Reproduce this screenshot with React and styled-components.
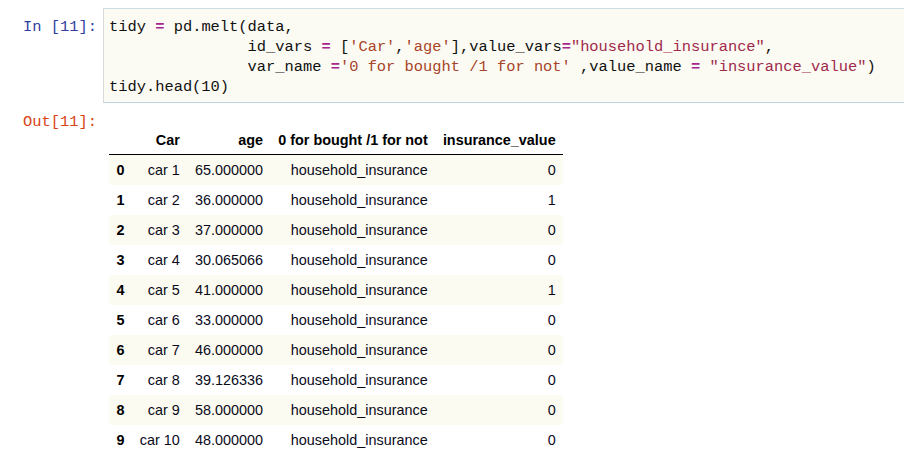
import React from "react";
import styled, { createGlobalStyle } from "styled-components";

const Global = createGlobalStyle`
  html, body { margin: 0; padding: 0; background: #ffffff; overflow: hidden; }
  #root { width: 904px; height: 461px; }
`;

const Page = styled.div`
  display: flex;
  flex-direction: column;
  padding-top: 8px;
`;

const CellRow = styled.div`
  display: flex;
  align-items: flex-start;
`;

const Prompt = styled.div`
  width: 103px;
  flex: none;
  box-sizing: border-box;
  padding: ${(p) => p.$pt || 0}px 6px 0 0;
  text-align: right;
  font-family: "Liberation Mono", "DejaVu Sans Mono", monospace;
  font-size: 15.4px;
  line-height: 20px;
  color: ${(p) => p.$color};
  white-space: pre;
`;

const CodeBox = styled.div`
  flex: 1;
  box-sizing: border-box;
  height: 95px;
  background: #fcfbf3;
  border: 1px solid #d6dbd6;
  border-right: none;
  border-top-color: #cadde6;
  border-bottom-color: #bad4e6;
  padding: 8px 0 4px 5px;
`;

const Code = styled.pre`
  margin: 0;
  font-family: "Liberation Mono", "DejaVu Sans Mono", monospace;
  font-size: 15.4px;
  line-height: 20px;
  color: #111111;
`;

const Op = styled.span`
  color: #a6258f;
  font-weight: bold;
`;

const Str = styled.span`
  color: ${(p) => (p.$dq ? "#9f2a4c" : "#a8442a")};
`;

const OutBody = styled.div`
  display: flex;
  flex-direction: column;
  padding-left: 6px;
  padding-top: 22px;
`;

const Table = styled.table`
  border-collapse: collapse;
  border-spacing: 0;
  font-family: "Liberation Sans", Arial, sans-serif;
  font-size: 14.4px;
  color: #000000;
`;

const Head = styled.thead`
  border-bottom: 1px solid #000000;
`;

const Th = styled.th`
  text-align: right;
  font-weight: bold;
  padding: 0 7.6px;
  height: 29px;
  line-height: 16px;
  vertical-align: middle;
  white-space: nowrap;
`;

const Tr = styled.tr`
  background: ${(p) => (p.$striped ? "#fcfbf1" : "transparent")};
`;

const IndexCell = styled.th`
  text-align: right;
  font-weight: bold;
  padding: 0 7.6px;
  height: 30px;
  line-height: 16px;
  vertical-align: middle;
`;

const Td = styled.td`
  text-align: right;
  padding: 0 7.6px;
  height: 30px;
  line-height: 16px;
  vertical-align: middle;
  white-space: nowrap;
  color: #0a0a1a;
`;

const rows = [
  ["car 1", "65.000000", 0],
  ["car 2", "36.000000", 1],
  ["car 3", "37.000000", 0],
  ["car 4", "30.065066", 0],
  ["car 5", "41.000000", 1],
  ["car 6", "33.000000", 0],
  ["car 7", "46.000000", 0],
  ["car 8", "39.126336", 0],
  ["car 9", "58.000000", 0],
  ["car 10", "48.000000", 0],
];

const indent = "               ";

export default function App() {
  return (
    <>
      <Global />
      <Page>
        <CellRow>
          <Prompt $color="#303f9f" $pt={9}>In [11]:</Prompt>
          <CodeBox>
            <Code>
              tidy <Op>=</Op> pd.melt(data,{"\n"}
              {indent}id_vars <Op>=</Op> [<Str>'Car'</Str>,<Str>'age'</Str>],value_vars<Op>=</Op>
              <Str $dq>"household_insurance"</Str>,{"\n"}
              {indent}var_name <Op>=</Op><Str>'0 for bought /1 for not'</Str> ,value_name <Op>=</Op>{" "}
              <Str $dq>"insurance_value"</Str>){"\n"}
              tidy.head(10)
            </Code>
          </CodeBox>
        </CellRow>
        <CellRow>
          <Prompt $color="#d84315" $pt={9}>Out[11]:</Prompt>
          <OutBody>
            <Table>
              <Head>
                <tr>
                  <Th></Th>
                  <Th>Car</Th>
                  <Th>age</Th>
                  <Th>0 for bought /1 for not</Th>
                  <Th>insurance_value</Th>
                </tr>
              </Head>
              <tbody>
                {rows.map((r, i) => (
                  <Tr key={i} $striped={i % 2 === 0}>
                    <IndexCell>{i}</IndexCell>
                    <Td>{r[0]}</Td>
                    <Td>{r[1]}</Td>
                    <Td>household_insurance</Td>
                    <Td>{r[2]}</Td>
                  </Tr>
                ))}
              </tbody>
            </Table>
          </OutBody>
        </CellRow>
      </Page>
    </>
  );
}
